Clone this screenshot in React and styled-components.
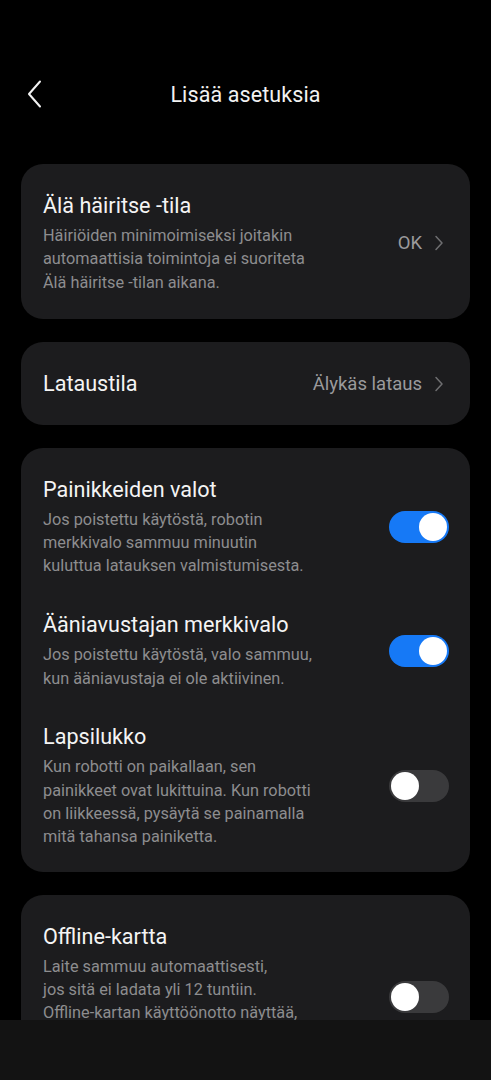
import React, { useState } from 'react';
import styled, { createGlobalStyle } from 'styled-components';

const GlobalStyle = createGlobalStyle`
  html, body {
    margin: 0;
    padding: 0;
    background: #000;
  }
  body {
    font-family: Roboto, "Noto Sans", "Liberation Sans", sans-serif;
    -webkit-font-smoothing: antialiased;
  }
`;

const Page = styled.div`
  width: 491px;
  height: 1080px;
  overflow: hidden;
  background: #000;
  color: #fff;
  box-sizing: border-box;
`;

const Header = styled.div`
  height: 52px;
  margin-top: 68px;
  display: flex;
  align-items: center;
  justify-content: center;
  position: relative;
`;

const BackButton = styled.button`
  position: absolute;
  left: 22px;
  top: 10px;
  width: 26px;
  height: 32px;
  padding: 0;
  border: none;
  background: none;
  display: flex;
  align-items: center;
  justify-content: center;
`;

const HeaderTitle = styled.h1`
  margin: 0;
  font-size: 21.5px;
  font-weight: 400;
  color: #f2f2f2;
  letter-spacing: 0.1px;
`;

const CardList = styled.div`
  padding: 44px 21px 0;
  display: flex;
  flex-direction: column;
  gap: 23px;
`;

const Card = styled.div`
  background: #1c1c1e;
  border-radius: 22px;
  padding: ${(p) => p.$pt || 28}px 21px ${(p) => p.$pb || 25}px 22px;
  display: flex;
  flex-direction: column;
  gap: 33.5px;
`;

const Row = styled.div`
  display: flex;
  align-items: center;
  justify-content: space-between;
`;

const TextBlock = styled.div`
  display: flex;
  flex-direction: column;
  gap: 4px;
`;

const Title = styled.div`
  font-size: 21.6px;
  line-height: 28px;
  color: #f4f4f4;
`;

const Desc = styled.div`
  font-size: 16.3px;
  line-height: 23.3px;
  color: #8d8d8f;
`;

const Value = styled.div`
  display: flex;
  align-items: center;
  gap: 12px;
  font-size: 18.5px;
  color: #9a9a9c;
  padding-right: 5px;
`;

const Track = styled.button`
  width: 60px;
  height: 32px;
  flex-shrink: 0;
  border: none;
  padding: 0 2px;
  border-radius: 16px;
  background: ${(p) => (p.$on ? '#1679f6' : '#3a3a3c')};
  display: flex;
  align-items: center;
  justify-content: ${(p) => (p.$on ? 'flex-end' : 'flex-start')};
  cursor: pointer;
`;

const Knob = styled.span`
  width: 28px;
  height: 28px;
  border-radius: 50%;
  background: #fff;
`;

const NavBar = styled.div`
  position: fixed;
  left: 0;
  right: 0;
  bottom: 0;
  height: 60px;
  background: #131313;
`;

const Chevron = () => (
  <svg width="10" height="16" viewBox="0 0 10 16" fill="none">
    <polyline points="2,1.5 8,8 2,14.5" stroke="#6e6e70" strokeWidth="1.5" strokeLinecap="round" strokeLinejoin="round" />
  </svg>
);

const BackIcon = () => (
  <svg width="16" height="28" viewBox="0 0 16 28" fill="none">
    <polyline points="13,1.5 2,14 13,26.5" stroke="#f2f2f2" strokeWidth="2" strokeLinecap="round" strokeLinejoin="round" />
  </svg>
);

const Lines = ({ lines }) =>
  lines.map((l, i) => (
    <React.Fragment key={i}>
      {l}
      {i < lines.length - 1 && <br />}
    </React.Fragment>
  ));

function Toggle({ initial }) {
  const [on, setOn] = useState(initial);
  return (
    <Track $on={on} onClick={() => setOn(!on)}>
      <Knob />
    </Track>
  );
}

function ToggleRow({ title, lines, on }) {
  return (
    <Row>
      <TextBlock>
        <Title>{title}</Title>
        <Desc>
          <Lines lines={lines} />
        </Desc>
      </TextBlock>
      <Toggle initial={on} />
    </Row>
  );
}

export default function App() {
  return (
    <Page>
      <GlobalStyle />
      <Header>
        <BackButton>
          <BackIcon />
        </BackButton>
        <HeaderTitle>Lisää asetuksia</HeaderTitle>
      </Header>

      <CardList>
        <Card>
          <Row>
            <TextBlock>
              <Title>Älä häiritse -tila</Title>
              <Desc>
                <Lines
                  lines={[
                    'Häiriöiden minimoimiseksi joitakin',
                    'automaattisia toimintoja ei suoriteta',
                    'Älä häiritse -tilan aikana.',
                  ]}
                />
              </Desc>
            </TextBlock>
            <Value>
              OK
              <Chevron />
            </Value>
          </Row>
        </Card>

        <Card $pt={28} $pb={27}>
          <Row>
            <Title>Lataustila</Title>
            <Value>
              Älykäs lataus
              <Chevron />
            </Value>
          </Row>
        </Card>

        <Card $pb={23}>
          <ToggleRow
            title="Painikkeiden valot"
            on
            lines={[
              'Jos poistettu käytöstä, robotin',
              'merkkivalo sammuu minuutin',
              'kuluttua latauksen valmistumisesta.',
            ]}
          />
          <ToggleRow
            title="Ääniavustajan merkkivalo"
            on
            lines={['Jos poistettu käytöstä, valo sammuu,', 'kun ääniavustaja ei ole aktiivinen.']}
          />
          <ToggleRow
            title="Lapsilukko"
            on={false}
            lines={[
              'Kun robotti on paikallaan, sen',
              'painikkeet ovat lukittuina. Kun robotti',
              'on liikkeessä, pysäytä se painamalla',
              'mitä tahansa painiketta.',
            ]}
          />
        </Card>

        <Card>
          <ToggleRow
            title="Offline-kartta"
            on={false}
            lines={[
              'Laite sammuu automaattisesti,',
              'jos sitä ei ladata yli 12 tuntiin.',
              'Offline-kartan käyttöönotto näyttää,',
              'missä laite sijaitsee, vaikka se',
              'olisi sammutettu.',
            ]}
          />
        </Card>
      </CardList>
      <NavBar />
    </Page>
  );
}
